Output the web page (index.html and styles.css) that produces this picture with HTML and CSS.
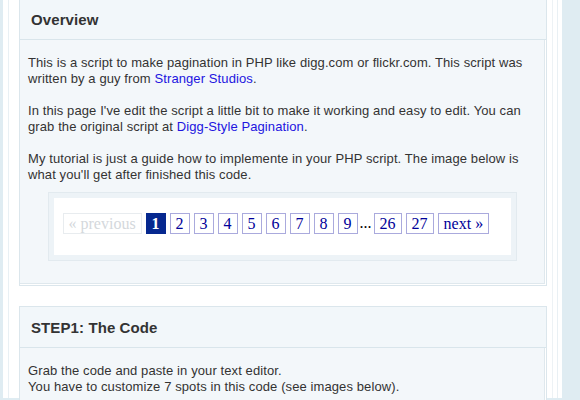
FILE: index.html
```html
<!DOCTYPE html>
<html>
<head>
<meta charset="utf-8">
<link rel="stylesheet" href="styles.css">
</head>
<body>
<div class="page">
  <div class="col">
    <div class="col2">
      <div class="box box-first">
        <div class="box-head"><h2>Overview</h2></div>
        <div class="box-body">
          <p>This is a script to make pagination in PHP like digg.com or flickr.com. This script was written by a guy from <a href="#">Stranger Studios</a>.</p>
          <p>In this page I've edit the script a little bit to make it working and easy to edit. You can grab the original script at <a href="#">Digg-Style Pagination</a>.</p>
          <p>My tutorial is just a guide how to implemente in your PHP script. The image below is what you'll get after finished this code.</p>
          <div class="pg-frame">
            <div class="pg-inner">
              <div class="pagination">
                <span class="disabled">« previous</span>
                <span class="current">1</span>
                <a href="#">2</a>
                <a href="#">3</a>
                <a href="#">4</a>
                <a href="#">5</a>
                <a href="#">6</a>
                <a href="#">7</a>
                <a href="#">8</a>
                <a href="#">9</a>
                <span class="dots">...</span>
                <a href="#">26</a>
                <a href="#">27</a>
                <a href="#">next »</a>
              </div>
            </div>
          </div>
        </div>
      </div>
      <div class="box">
        <div class="box-head"><h2>STEP1: The Code</h2></div>
        <div class="box-body">
          <p>Grab the code and paste in your text editor.<br>You have to customize 7 spots in this code (see images below).</p>
          <p>&nbsp;</p>
        </div>
      </div>
    </div>
  </div>
</div>
</body>
</html>
```

FILE: styles.css
```css
html, body {
  margin: 0;
  padding: 0;
}
body {
  background: #dfecf2;
  font-family: "Liberation Sans", Arial, sans-serif;
  font-size: 13px;
  color: #333;
  overflow: hidden;
  height: 400px;
}
.page {
  margin-left: 3px;
  width: 559px;
  box-sizing: border-box;
  padding: 0 4px 0 5px;
  background: #fff;
  height: 400px;
}
.col {
  border-left: 1px solid #e9f0f4;
  border-right: 1px solid #e9f0f4;
  height: 400px;
}
.col2 {
  margin-right: 4px;
  border-right: 1px solid #edf2f5;
  padding: 0 5px 0 10px;
  height: 400px;
}
.box {
  border: 1px solid #dbe6ec;
  background: #fff;
  margin-top: 20px;
}
.box-first {
  margin-top: -2px;
}
.box-head {
  height: 40px;
  background: #f2f7fa;
  border-bottom: 1px solid #d9e5eb;
  display: flex;
  align-items: center;
  padding-left: 11px;
}
.box-head h2 {
  margin: 0;
  font-size: 15px;
  font-weight: bold;
  color: #333;
  letter-spacing: 0.1px;
}
.box-body {
  background: #f3f7fa;
  border-right: 1px solid #dfe8ed;
  border-bottom: 1px solid #dfe8ed;
  margin: 0 1px 1px 0;
  padding: 15px 8px 22px 8px;
}
.box-body p {
  margin: 0 0 16px 0;
  line-height: 16px;
  letter-spacing: 0.1px;
}
.box-body p:last-of-type {
  margin-bottom: 9px;
}
.box-body a {
  color: #2214e0;
  text-decoration: none;
}
.pg-frame {
  width: 469px;
  box-sizing: border-box;
  margin: 0 auto;
  border: 1px solid #e2eaef;
  background: #edf3f7;
  padding: 5px;
}
.pg-inner {
  background: #fff;
  padding: 15px 9px 21px 9px;
}
.pagination {
  display: flex;
  gap: 4px;
  font-family: "Liberation Serif", "Times New Roman", serif;
  font-size: 16px;
  line-height: 19px;
}
.pagination a,
.pagination span {
  display: block;
  padding: 0 5px;
  border: 1px solid #aaaadd;
  color: #000099;
  text-decoration: none;
}
.pagination span.disabled {
  border-color: #e8ecef;
  color: #d4d8dc;
}
.pagination span.current {
  background: #06288f;
  border-color: #06288f;
  color: #fff;
  font-weight: bold;
}
.pagination span.dots {
  border: none;
  padding: 0;
  margin: 0 -2px;
  color: #000;
}
```
